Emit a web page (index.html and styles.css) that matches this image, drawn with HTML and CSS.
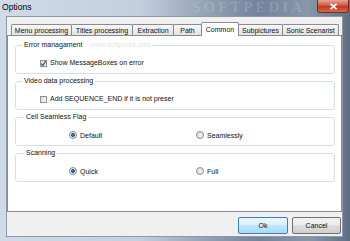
FILE: index.html
```html
<!DOCTYPE html>
<html lang="en">

<head>
    <meta charset="UTF-8">
    <meta name="viewport" content="width=device-width, initial-scale=1.0">
    <title>Options</title>
    <link rel="stylesheet" href="styles.css">
</head>

<body>
    <div class="window">
        <!-- title bar -->
        <div class="titlebar">
            <span class="title">Options</span>
            <span class="watermark">SOFTPEDIA</span>
            <div class="close">
                <svg width="9" height="7" viewBox="0 0 9 7">
                    <path d="M1.5 0.8 L7.5 6.2 M7.5 0.8 L1.5 6.2" stroke="#fff" stroke-width="1.8" fill="none" />
                </svg>
            </div>
        </div>

        <div class="client">
            <div class="tabs">
                <div class="tab tab-menu">Menu processing</div>
                <div class="tab tab-titles">Titles processing</div>
                <div class="tab tab-extraction">Extraction</div>
                <div class="tab tab-path">Path</div>
                <div class="tab tab-common active">Common</div>
                <div class="tab tab-subpictures">Subpictures</div>
                <div class="tab tab-sonic">Sonic Scenarist</div>
            </div>

            <div class="panel">
                <fieldset class="group">
                    <legend>Error managament<span class="wm">www.softpedia.com</span></legend>
                    <div class="check-row">
                        <span class="check">
                            <svg width="7" height="7" viewBox="0 0 7 7">
                                <path d="M1.2 3.6 L2.8 5.4 L5.9 1.2" stroke="#3b5a93" stroke-width="1.3" fill="none" />
                            </svg>
                        </span>
                        <span class="label">Show MessageBoxes on error</span>
                    </div>
                </fieldset>

                <fieldset class="group">
                    <legend>Video data processing</legend>
                    <div class="check-row">
                        <span class="check"></span>
                        <span class="label clipped">Add SEQUENCE_END if it is not preser</span>
                    </div>
                </fieldset>

                <fieldset class="group group-wide">
                    <legend>Cell Seamless Flag</legend>
                    <div class="radio-row">
                        <div class="option"><span class="radio checked"></span>Default</div>
                        <div class="option"><span class="radio"></span>Seamlessly</div>
                    </div>
                </fieldset>

                <fieldset class="group group-wide">
                    <legend>Scanning</legend>
                    <div class="radio-row">
                        <div class="option"><span class="radio checked"></span>Quick</div>
                        <div class="option"><span class="radio"></span>Full</div>
                    </div>
                </fieldset>
            </div>

            <div class="buttons">
                <div class="btn btn-default">Ok</div>
                <div class="btn">Cancel</div>
            </div>
        </div>
    </div>
</body>

</html>
```

FILE: styles.css
```css
/* general */

* {
    box-sizing: border-box;
}

body {
    margin: 0;
    font-family: 'Liberation Sans', Arial, sans-serif;
    font-size: 7px;
    color: #111;
}

.window {
    width: 350px;
    height: 241px;
    display: flex;
    flex-direction: column;
    overflow: hidden;
    background: linear-gradient(90deg, #cfdbe8 0%, #c2cfdf 40%, #95a4b6 58%, #71829a 74%, #8898ab 88%, #5f6f84 100%);
}

/* title bar */

.titlebar {
    height: 16px;
    display: flex;
    align-items: flex-start;
}

.title {
    font-size: 8.6px;
    line-height: 10px;
    padding: 2px 0 0 2px;
    color: #000;
}

.watermark {
    margin-left: auto;
    margin-right: 12px;
    font-family: 'Liberation Serif', serif;
    font-weight: bold;
    font-size: 15px;
    line-height: 15px;
    letter-spacing: 3px;
    color: rgba(255, 255, 255, 0.16);
}

.close {
    width: 32px;
    height: 13px;
    margin-right: 1px;
    display: flex;
    align-items: center;
    justify-content: center;
    border: 1px solid #7a2a22;
    border-top: 0;
    border-radius: 0 0 3px 3px;
    background: linear-gradient(#e7a596, #cf5a42 45%, #c2391f 55%, #d8684a);
}

/* client area */

.client {
    flex: 1;
    margin: 0 7px 4px 6px;
    border: 1px solid #8d99a7;
    background: #f0f0f0;
}

.tabs {
    display: flex;
    align-items: flex-end;
    height: 18px;
    padding: 0 0 0 4px;
}

.tab {
    height: 11px;
    margin-right: -1px;
    padding-top: 1px;
    line-height: 9px;
    text-align: center;
    white-space: nowrap;
    border: 1px solid #898c95;
    border-bottom: 0;
    border-radius: 2px 2px 0 0;
    background: linear-gradient(#f8f8f8, #ececec 50%, #e2e2e2);
}

.tab.active {
    height: 14px;
    padding-top: 2px;
    margin-bottom: -1px;
    background: #fff;
    position: relative;
    z-index: 1;
}

.tab-menu { width: 61px; }
.tab-titles { width: 62px; }
.tab-extraction { width: 42px; }
.tab-path { width: 29px; }
.tab-common { width: 38px; }
.tab-subpictures { width: 45px; }
.tab-sonic { width: 57px; }

.panel {
    height: 177px;
    padding: 5px 6px 0 7px;
    border: 1px solid #898c95;
    background: #fff;
}

/* group boxes */

.group {
    margin: 0 0 3px;
    padding: 0;
    min-width: 0;
    border: 1px solid #d5dfe5;
    border-radius: 3px;
}

.group legend {
    margin-left: 6px;
    padding: 0 2px;
    line-height: 8px;
}

.group-wide legend {
    margin-left: 8px;
}

.wm {
    margin-left: 8px;
    color: #e1e5e9;
}

.check-row,
.radio-row {
    display: flex;
    align-items: center;
    height: 10px;
    margin: 9px 0 5px;
}

.check-row {
    padding-left: 24px;
}

.radio-row {
    padding-left: 53px;
}

.check {
    width: 7px;
    height: 7px;
    margin-right: 3px;
    display: flex;
    border: 1px solid #8f8f8f;
    background: linear-gradient(135deg, #dcdcdc, #f7f7f7);
}

.check svg {
    margin: -1px;
}

.label {
    white-space: nowrap;
    line-height: 10px;
}

.clipped {
    width: 124px;
}

.option {
    width: 127px;
    display: flex;
    align-items: center;
    white-space: nowrap;
}

.radio {
    width: 8px;
    height: 8px;
    margin-right: 3px;
    border: 1px solid #8e8f8f;
    border-radius: 50%;
    background: radial-gradient(circle at 60% 60%, #f4f4f4, #d0d0d0);
}

.radio.checked {
    background: radial-gradient(circle, #2f7fd0 0, #1c5fa8 1.6px, #e9e9e9 2.2px, #d6d6d6 100%);
}

/* buttons */

.buttons {
    display: flex;
    justify-content: flex-end;
    gap: 4px;
    margin-top: 5px;
    padding-right: 1px;
}

.btn {
    width: 49px;
    height: 17px;
    line-height: 15px;
    text-align: center;
    border: 1px solid #707070;
    border-radius: 2px;
    background: linear-gradient(#f2f2f2, #ebebeb 50%, #dddddd 50%, #cfcfcf);
}

.btn-default {
    width: 50px;
    border-color: #3c7fb1;
    background: linear-gradient(#eaf6fd, #d9f0fc 50%, #bee6fd 50%, #a7d9f5);
}
```
